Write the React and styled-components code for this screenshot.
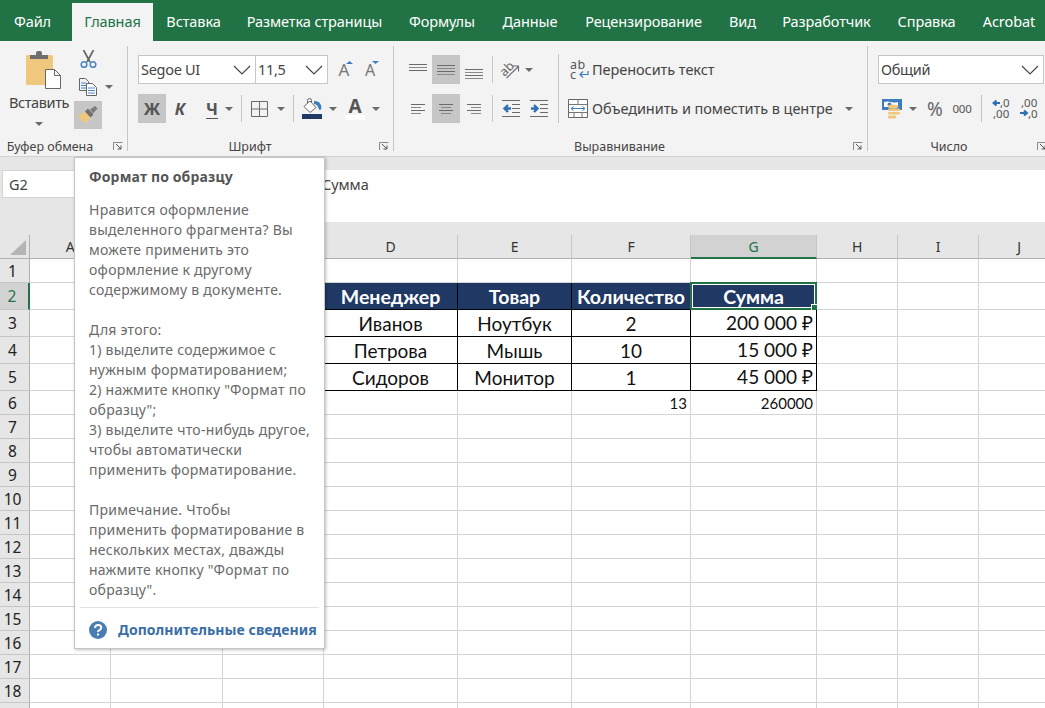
import styled, { createGlobalStyle } from "styled-components";

const UI_FONT = `"Noto Sans", "Open Sans", sans-serif`;
const CELL_FONT = `Lato, "Noto Sans", sans-serif`;

const GlobalStyle = createGlobalStyle`
    html, body {
        margin: 0;
        padding: 0;
        background: #fff;
    }
    * {
        box-sizing: border-box;
    }
`;

const tabs = [
    ["Файл", 72], ["Главная", 81], ["Вставка", 81], ["Разметка страницы", 161], ["Формулы", 94],
    ["Данные", 82], ["Рецензирование", 145], ["Вид", 53], ["Разработчик", 115], ["Справка", 85], ["Acrobat", 80],
];

const colWidths = [30, 81, 112, 101, 134, 114, 119, 126, 81, 81, 81];
const colNames = ["A", "B", "C", "D", "E", "F", "G", "H", "I", "J"];
const rowHeights = [24, 27, 27, 27, 27, 24, 24, 24, 24, 24, 24, 24, 24, 24, 24, 24, 24, 24, 24];

const cells = {
    "2-3": { text: "Менеджер", kind: "head" },
    "2-4": { text: "Товар", kind: "head" },
    "2-5": { text: "Количество", kind: "head" },
    "2-6": { text: "Сумма", kind: "head", selected: true },
    "3-3": { text: "Иванов", kind: "body" },
    "3-4": { text: "Ноутбук", kind: "body" },
    "3-5": { text: "2", kind: "body" },
    "3-6": { text: "200 000 ₽", kind: "body", right: true },
    "4-3": { text: "Петрова", kind: "body" },
    "4-4": { text: "Мышь", kind: "body" },
    "4-5": { text: "10", kind: "body" },
    "4-6": { text: "15 000 ₽", kind: "body", right: true },
    "5-3": { text: "Сидоров", kind: "body" },
    "5-4": { text: "Монитор", kind: "body" },
    "5-5": { text: "1", kind: "body" },
    "5-6": { text: "45 000 ₽", kind: "body", right: true },
    "6-5": { text: "13", kind: "plain", right: true },
    "6-6": { text: "260000", kind: "plain", right: true },
};

const tipParagraphs = [
    "Нравится оформление\nвыделенного фрагмента? Вы\nможете применить это\nоформление к другому\nсодержимому в документе.",
    "Для этого:\n1) выделите содержимое с\nнужным форматированием;\n2) нажмите кнопку \"Формат по\nобразцу\";\n3) выделите что-нибудь другое,\nчтобы автоматически\nприменить форматирование.",
    "Примечание. Чтобы\nприменить форматирование в\nнескольких местах, дважды\nнажмите кнопку \"Формат по\nобразцу\".",
];

const Caret = () => (
    <svg width="8" height="4" viewBox="0 0 8 4"><path d="M0 0h8L4 4z" fill="#6a6a6a" /></svg>
);

const Chevron = () => (
    <ChevronWrap>
        <svg width="18" height="10" viewBox="0 0 18 10"><path d="M1 1l8 8 8-8" fill="none" stroke="#444" strokeWidth="1.1" /></svg>
    </ChevronWrap>
);

const Launcher = () => (
    <svg width="10" height="9" viewBox="0 0 10 9">
        <path d="M.5 8V.5H9.500" fill="none" stroke="#8a8a8a" />
        <path d="M3 2l5 5M8 3.500V7H4.500" fill="none" stroke="#555" />
    </svg>
);

const PasteIcon = () => (
    <svg width="35" height="38" viewBox="0 0 35 38">
        <rect x="0" y="4" width="27" height="30" rx="1.500" fill="#efc77d" />
        <path d="M4 8V4h6V2q0-2 2-2h2q2 0 2 2v2h6v4z" fill="#6f6f6f" />
        <path d="M19.500 18.500h9l6 6v13h-15z" fill="#fff" stroke="#666" />
        <path d="M28.500 18.500v6h6" fill="none" stroke="#666" />
    </svg>
);

const ScissorsIcon = () => (
    <svg width="17" height="18" viewBox="0 0 17 18">
        <path d="M3.500 0l6.500 12M13.500 0L7 12" fill="none" stroke="#666" strokeWidth="1.700" />
        <circle cx="4" cy="14.500" r="2.800" fill="#f3f3f3" stroke="#4a86c5" strokeWidth="1.500" />
        <circle cx="13" cy="14.500" r="2.800" fill="#f3f3f3" stroke="#4a86c5" strokeWidth="1.500" />
    </svg>
);

const CopyIcon = () => (
    <svg width="18" height="18" viewBox="0 0 18 18">
        <path d="M.5.5h6l3 3v9h-9z" fill="#f3f3f3" stroke="#666" />
        <path d="M2 5h5M2 7.500h5M2 10h5" stroke="#4a86c5" />
        <path d="M7.500 5.500h6l4 4v8h-10z" fill="#fff" stroke="#666" />
        <path d="M9 10h7M9 12.500h7M9 15h7" stroke="#4a86c5" />
    </svg>
);

const BrushIcon = () => (
    <svg width="20" height="18" viewBox="0 0 20 18">
        <path d="M0 10l8-5 5 6-5 6q-5-2-8-7z" fill="#efc77d" />
        <path d="M7 5.500l3-3 5.500 6-3 3z" fill="#6f6f6f" />
        <path d="M12 3.500L17 0l2.500 2.500L15 7.500z" fill="#7d7d7d" />
    </svg>
);

const BordersIcon = () => (
    <svg width="17" height="16" viewBox="0 0 17 16">
        <path d="M.5.5h16v15H.5zM8.500.5v15M.5 8h16" fill="none" stroke="#6a6a6a" />
    </svg>
);

const FillIcon = () => (
    <svg width="20" height="21" viewBox="0 0 20 21">
        <path d="M2 8.500l6-5.500 6 6.500-6 5z" fill="#fff" stroke="#666" />
        <path d="M5.500 5V2.500q0-2 2-2t2 2V5" fill="none" stroke="#666" />
        <path d="M12 3q7-.5 7.500 7l-1.500 2.500-2-3q0-3-4-3.500z" fill="#3f7cbf" />
        <rect x="0" y="16" width="20" height="5" fill="#1f3864" />
    </svg>
);

const Lines = ({ rows, width = 18, height = 20 }) => (
    <svg width={width} height={height} viewBox={`0 0 ${width} ${height}`}>
        {rows.map(([x, y, w], i) => (
            <rect key={i} x={x} y={y} width={w} height="1" fill={i % 2 ? "#8a8a8a" : "#6a6a6a"} />
        ))}
    </svg>
);

const OrientIcon = () => (
    <svg width="20" height="18" viewBox="0 0 20 18">
        <text x="0" y="13" fontSize="12.500" fontFamily={UI_FONT} fill="#666" transform="rotate(-45 6 9)">ab</text>
        <path d="M6.500 17L18 6M13 5h5.500v5.500" fill="none" stroke="#6a6a6a" strokeWidth="1.100" />
    </svg>
);

const WrapIcon = () => (
    <svg width="19" height="19" viewBox="0 0 19 19">
        <text x="0" y="9" fontSize="12.500" letterSpacing=".6" fontFamily={UI_FONT} fill="#555">ab</text>
        <text x="0" y="18.500" fontSize="12.500" fontFamily={UI_FONT} fill="#555">c</text>
        <path d="M18 11v3.500H10M13 11.500l-3 3 3 3" fill="none" stroke="#3f7cbf" strokeWidth="1.200" />
    </svg>
);

const MergeIcon = () => (
    <svg width="20" height="19" viewBox="0 0 20 19">
        <path d="M.5.5h19v18H.5z" fill="#fff" stroke="#666" />
        <path d="M.5 5.500h19M.5 13.500h19M10 .5v5M6 13.500v5M14 13.500v5" fill="none" stroke="#777" />
        <path d="M3 9.500h14M5.500 7.500L3 9.500l2.500 2M14.500 7.500l2.500 2-2.500 2" fill="none" stroke="#3f7cbf" />
    </svg>
);

const IndentIcon = ({ right }) => (
    <svg width="18" height="17" viewBox="0 0 18 17">
        <path d="M0 .5h18M10 4.500h8M10 8.500h8M10 12.500h8M0 16.500h18" stroke="#6a6a6a" />
        <path
            d={right ? "M1 8.500h6M4 5l3.500 3.500L4 12" : "M9 8.500H3M6 5L2.500 8.500 6 12"}
            fill="none"
            stroke="#2f6fb5"
            strokeWidth="2.400"
        />
    </svg>
);

const CurrencyIcon = () => (
    <svg width="20" height="20" viewBox="0 0 20 20">
        <rect x="0" y="0" width="20" height="11" fill="#3f7cbf" />
        <path d="M2 3q3-1 7 0t7 0v5H2z" fill="#fff" />
        <ellipse cx="7.500" cy="5.500" rx="2" ry="2" fill="#3f7cbf" />
        <ellipse cx="11" cy="7.500" rx="5.500" ry="2" fill="#efc77d" />
        <rect x="6" y="9.500" width="12" height="2.500" rx="1" fill="#efc77d" />
        <rect x="6" y="13" width="12" height="2.500" rx="1" fill="#efc77d" />
        <rect x="6" y="16.500" width="8" height="3" rx="1" fill="#efc77d" />
    </svg>
);

const DigitsIcon = ({ increase }) => (
    <svg width="18" height="21" viewBox="0 0 18 21">
        <g fontSize="11.500" fontFamily={UI_FONT} fill="#555">
            <text x={increase ? 1 : 8} y="9">{increase ? ",00" : ",0"}</text>
            <text x={increase ? 8 : 1} y="19.500">{increase ? ",0" : ",00"}</text>
        </g>
        <path
            d={increase ? "M0 15h6.500M4 12.500L7 15l-3 2.500" : "M8 5H1.500M4.500 2.500L1.500 5l3 2.500"}
            fill="none"
            stroke="#2f6fb5"
            strokeWidth="2"
        />
    </svg>
);

const GrowMark = ({ down }) => (
    <svg width="7" height="3" viewBox="0 0 7 3">
        <path d={down ? "M0 0h7L3.500 3z" : "M0 3h7L3.500 0z"} fill="#3f7cbf" />
    </svg>
);

const HelpIcon = () => (
    <svg width="18" height="18" viewBox="0 0 18 18">
        <circle cx="9" cy="9" r="9" fill="#4a7eb3" />
        <path d="M6 7q0-3 3.200-3t3 2.700q0 1.500-1.700 2.400T9 11" fill="none" stroke="#fff" strokeWidth="2" />
        <rect x="8" y="12.500" width="2" height="2" fill="#fff" />
    </svg>
);

const CornerMark = () => (
    <svg width="16" height="15" viewBox="0 0 16 15"><path d="M16 0v15H0z" fill="#b4b4b4" /></svg>
);

const SheetRow = ({ r }) => (
    <>
        <RowHead $current={r === 1}>{r + 1}</RowHead>
        {colNames.map((_, c) => {
            const cell = cells[`${r + 1}-${c}`];
            const inTable = r >= 1 && r <= 4 && c >= 3 && c <= 6;
            return (
                <Cell key={c} $table={inTable} $kind={cell?.kind} $right={cell?.right} $selected={cell?.selected}>
                    {cell?.text}
                </Cell>
            );
        })}
    </>
);

const App = () => {
    return (
        <Page>
            <GlobalStyle />
            <TabBar>
                {tabs.map(([name, width], i) => (
                    <Tab key={name} $w={width} $active={i === 1}>{name}</Tab>
                ))}
            </TabBar>
            <Ribbon>
                <Group $w={127}>
                    <GroupBody>
                        <PasteColumn>
                            <PasteArt><PasteIcon /></PasteArt>
                            <PasteLabel>Вставить</PasteLabel>
                            <Caret />
                        </PasteColumn>
                        <ClipTools>
                            <Slot $w={28}><ScissorsIcon /></Slot>
                            <Slot $w={28}>
                                <CopyIcon />
                                <CopyCaret><Caret /></CopyCaret>
                            </Slot>
                            <Slot $w={28} $on><BrushIcon /></Slot>
                        </ClipTools>
                    </GroupBody>
                    <GroupFooter>
                        <GroupLabel $w={100}>Буфер обмена</GroupLabel>
                        <Launcher />
                    </GroupFooter>
                </Group>
                <GroupDivider />
                <Group $w={265}>
                    <GroupBody>
                        <RowStack>
                            <ToolRow>
                                <SelectBox $w={118}><span>Segoe UI</span><Chevron /></SelectBox>
                                <SelectBox $w={72} $joined><span>11,5</span><Chevron /></SelectBox>
                                <Slot $w={16} $ml={8}><SizeGlyph>A<GrowTip><GrowMark /></GrowTip></SizeGlyph></Slot>
                                <Slot $w={14} $ml={11}><SizeGlyph $small>A<GrowTip><GrowMark down /></GrowTip></SizeGlyph></Slot>
                            </ToolRow>
                            <ToolRow>
                                <Slot $w={28} $on><FontGlyph>Ж</FontGlyph></Slot>
                                <Slot $w={28}><FontGlyph $italic>К</FontGlyph></Slot>
                                <Slot $w={26} $ml={5}><FontGlyph $underline>Ч</FontGlyph></Slot>
                                <Slot $w={8}><Caret /></Slot>
                                <RowRule $ml={8} />
                                <Slot $w={17} $ml={9}><BordersIcon /></Slot>
                                <Slot $w={8} $ml={9}><Caret /></Slot>
                                <RowRule $ml={8} />
                                <Slot $w={20} $ml={8}><FillIcon /></Slot>
                                <Slot $w={8} $ml={7}><Caret /></Slot>
                                <Slot $w={20} $ml={8}><ColorGlyph>A</ColorGlyph></Slot>
                                <Slot $w={8} $ml={7}><Caret /></Slot>
                            </ToolRow>
                        </RowStack>
                    </GroupBody>
                    <GroupFooter>
                        <GroupLabel $w={244}>Шрифт</GroupLabel>
                        <Launcher />
                    </GroupFooter>
                </Group>
                <GroupDivider />
                <Group $w={473}>
                    <GroupBody>
                        <RowStack $w={154}>
                            <ToolRow>
                                <Slot $w={28}><Lines rows={[[1, 4, 18], [1, 7, 18], [1, 10, 18]]} width={20} /></Slot>
                                <Slot $w={28} $on><Lines rows={[[1, 5, 18], [1, 8, 18], [1, 11, 18], [1, 14, 18]]} width={20} /></Slot>
                                <Slot $w={28}><Lines rows={[[1, 9, 18], [1, 12, 18], [1, 15, 18], [1, 18, 18]]} width={20} /></Slot>
                                <RowRule $ml={4} />
                                <Slot $w={20} $ml={7}><OrientIcon /></Slot>
                                <Slot $w={8} $ml={5}><Caret /></Slot>
                            </ToolRow>
                            <ToolRow>
                                <Slot $w={28}><Lines rows={[[2, 5, 14], [2, 8, 10], [2, 11, 14], [2, 14, 10]]} /></Slot>
                                <Slot $w={28} $on><Lines rows={[[2, 5, 14], [4, 8, 10], [2, 11, 14], [4, 14, 10]]} /></Slot>
                                <Slot $w={28}><Lines rows={[[2, 5, 14], [6, 8, 10], [2, 11, 14], [6, 14, 10]]} /></Slot>
                                <RowRule $ml={4} />
                                <Slot $w={18} $ml={9}><IndentIcon /></Slot>
                                <Slot $w={18} $ml={10}><IndentIcon right /></Slot>
                            </ToolRow>
                        </RowStack>
                        <BlockRule />
                        <RowStack>
                            <ToolRow>
                                <Slot $w={19} $ml={11}><WrapIcon /></Slot>
                                <ToolText $ml={3}>Переносить текст</ToolText>
                            </ToolRow>
                            <ToolRow>
                                <Slot $w={20} $ml={9}><MergeIcon /></Slot>
                                <ToolText $ml={4}>Объединить и поместить в центре</ToolText>
                                <Slot $w={8} $ml={12}><Caret /></Slot>
                            </ToolRow>
                        </RowStack>
                    </GroupBody>
                    <GroupFooter>
                        <GroupLabel $w={451}>Выравнивание</GroupLabel>
                        <Launcher />
                    </GroupFooter>
                </Group>
                <GroupDivider />
                <Group $w={183}>
                    <GroupBody>
                        <RowStack>
                            <ToolRow>
                                <SelectBox $w={166}><span>Общий</span><Chevron /></SelectBox>
                            </ToolRow>
                            <ToolRow>
                                <Slot $w={20} $ml={4}><CurrencyIcon /></Slot>
                                <Slot $w={8} $ml={7}><Caret /></Slot>
                                <Slot $w={16} $ml={10}><PercentGlyph>%</PercentGlyph></Slot>
                                <Slot $w={18} $ml={10}><ThousandGlyph>000</ThousandGlyph></Slot>
                                <RowRule $ml={10} />
                                <Slot $w={18} $ml={10}><DigitsIcon /></Slot>
                                <Slot $w={18} $ml={10}><DigitsIcon increase /></Slot>
                            </ToolRow>
                        </RowStack>
                    </GroupBody>
                    <GroupFooter>
                        <GroupLabel $w={162}>Число</GroupLabel>
                        <Launcher />
                    </GroupFooter>
                </Group>
            </Ribbon>
            <FormulaStrip>
                <NameBox>G2</NameBox>
                <FormulaInput>Сумма</FormulaInput>
            </FormulaStrip>
            <Sheet>
                <CornerCell><CornerMark /></CornerCell>
                {colNames.map((name) => (
                    <ColHead key={name} $current={name === "G"}>{name}</ColHead>
                ))}
                {rowHeights.map((_, r) => (
                    <SheetRow key={r} r={r} />
                ))}
            </Sheet>
            <ScreenTip>
                <TipTitle>Формат по образцу</TipTitle>
                <TipBody>
                    {tipParagraphs.map((text) => (
                        <TipParagraph key={text}>{text}</TipParagraph>
                    ))}
                </TipBody>
                <TipFooter>
                    <HelpIcon />
                    <TipLink>Дополнительные сведения</TipLink>
                </TipFooter>
            </ScreenTip>
        </Page>
    );
};

const Page = styled.div`
    position: relative;
    width: 1045px;
    height: 708px;
    overflow: hidden;
    font-family: ${UI_FONT};
    color: #444;
    background: #fff;
`;

const TabBar = styled.div`
    display: flex;
    height: 41px;
    padding-top: 3px;
    background: #217346;
    overflow: hidden;
`;

const Tab = styled.div`
    flex: 0 0 ${(p) => p.$w}px;
    display: flex;
    align-items: center;
    justify-content: center;
    padding-bottom: 3px;
    font-size: 14.5px;
    letter-spacing: -0.1px;
    white-space: nowrap;
    color: ${(p) => (p.$active ? "#217346" : "#fff")};
    background: ${(p) => (p.$active ? "#f3f3f3" : "transparent")};

    &:first-child {
        padding-right: 7px;
    }
`;

const Ribbon = styled.div`
    display: flex;
    height: 116px;
    background: #f3f3f3;
    border-bottom: 1px solid #d2d2d2;
    overflow: hidden;
`;

const Group = styled.section`
    flex: 0 0 ${(p) => p.$w}px;
    display: flex;
    flex-direction: column;
`;

const GroupBody = styled.div`
    flex: 1;
    display: flex;
    min-height: 0;
    padding-left: 10px;
`;

const GroupFooter = styled.div`
    flex: 0 0 22px;
    display: flex;
    align-items: center;
    justify-content: space-between;
    padding: 2px 4px 0 0;
`;

const GroupLabel = styled.div`
    width: ${(p) => p.$w}px;
    text-align: center;
    font-size: 12.5px;
    color: #444;
    white-space: nowrap;
`;

const GroupDivider = styled.div`
    flex: 0 0 1px;
    margin: 5px 0;
    background: #c6c6c6;
`;

const PasteColumn = styled.div`
    flex: 0 0 60px;
    margin: 0 5px 0 -1px;
    display: flex;
    flex-direction: column;
    align-items: center;
    padding-top: 10px;
`;

const PasteArt = styled.div`
    height: 38px;
    margin-left: 8px;
`;

const PasteLabel = styled.div`
    margin: 3px 0 10px;
    font-size: 14.5px;
    letter-spacing: -0.4px;
    line-height: 20px;
    white-space: nowrap;
`;

const ClipTools = styled.div`
    display: flex;
    flex-direction: column;
    padding-top: 4px;
`;

const CopyCaret = styled.span`
    position: absolute;
    left: 31px;
    top: 12px;
    display: flex;
`;

const Slot = styled.div`
    position: relative;
    flex: 0 0 ${(p) => p.$w}px;
    width: ${(p) => p.$w}px;
    height: 29px;
    margin-left: ${(p) => p.$ml ?? 0}px;
    display: flex;
    align-items: center;
    justify-content: center;
    background: ${(p) => (p.$on ? "#c6c6c6" : "transparent")};
`;

const RowStack = styled.div`
    flex: 0 0 ${(p) => (p.$w ? `${p.$w}px` : "auto")};
    display: flex;
    flex-direction: column;
    gap: 10px;
    padding-top: 14px;
`;

const ToolRow = styled.div`
    display: flex;
    align-items: center;
    height: 29px;
`;

const RowRule = styled.div`
    flex: 0 0 1px;
    height: 27px;
    margin-left: ${(p) => p.$ml ?? 0}px;
    background: #c6c6c6;
`;

const BlockRule = styled.div`
    flex: 0 0 1px;
    height: 69px;
    margin-top: 13px;
    background: #c6c6c6;
`;

const SelectBox = styled.div`
    flex: 0 0 ${(p) => p.$w}px;
    height: 29px;
    display: flex;
    align-items: center;
    justify-content: space-between;
    padding: 0 4px 2px 2px;
    background: #fff;
    border: 1px solid #c6c6c6;
    border-left-width: ${(p) => (p.$joined ? 0 : 1)}px;
    font-size: 14.5px;
    letter-spacing: -0.3px;
    color: #444;
    white-space: nowrap;
`;

const ChevronWrap = styled.span`
    display: flex;
    margin-top: 2px;
`;

const SizeGlyph = styled.div`
    position: relative;
    font-size: ${(p) => (p.$small ? 16 : 17)}px;
    line-height: 20px;
    color: #777;
`;

const GrowTip = styled.span`
    position: absolute;
    right: -4px;
    top: 1px;
    display: flex;
`;

const FontGlyph = styled.span`
    font-size: 16.5px;
    font-weight: 700;
    font-style: ${(p) => (p.$italic ? "italic" : "normal")};
    color: #555;
    text-decoration: ${(p) => (p.$underline ? "underline" : "none")};
    text-underline-offset: 3px;
`;

const ColorGlyph = styled.span`
    display: block;
    width: 20px;
    margin-top: 1px;
    text-align: center;
    font-size: 19px;
    font-weight: 700;
    line-height: 17px;
    color: #555;
    border-bottom: 5px solid #fff;
`;

const ToolText = styled.div`
    margin-left: ${(p) => p.$ml}px;
    padding-bottom: 2px;
    font-size: 14.5px;
    letter-spacing: -0.06px;
    color: #444;
    white-space: nowrap;
`;

const PercentGlyph = styled.span`
    font-size: 19px;
    color: #666;
`;

const ThousandGlyph = styled.span`
    font-size: 11.5px;
    color: #555;
    letter-spacing: -0.2px;
`;

const FormulaStrip = styled.div`
    display: flex;
    height: 78px;
    padding: 13px 0 13px 2px;
    background: #e6e6e6;
`;

const NameBox = styled.div`
    flex: 0 0 100px;
    height: 28px;
    padding-left: 6px;
    line-height: 26px;
    font-size: 14.5px;
    background: #fff;
    border: 1px solid #d4d4d4;
    color: #444;
`;

const FormulaInput = styled.div`
    flex: 1;
    margin-left: 200px;
    padding: 4px 0 0 20px;
    font-size: 14.5px;
    letter-spacing: -0.06px;
    color: #444;
    background: #fff;
`;

const Sheet = styled.div`
    display: grid;
    grid-template-columns: ${colWidths.map((w) => `${w}px`).join(" ")};
    grid-template-rows: 24px ${rowHeights.map((h) => `${h}px`).join(" ")};
    background: #fff;
`;

const CornerCell = styled.div`
    display: flex;
    align-items: flex-end;
    justify-content: flex-end;
    padding: 0 3px 3px 0;
    background: #e6e6e6;
    border-right: 1px solid #b1b1b1;
    border-bottom: 1px solid #b1b1b1;
`;

const ColHead = styled.div`
    display: flex;
    align-items: center;
    justify-content: center;
    font-size: 14px;
    letter-spacing: -0.3px;
    color: ${(p) => (p.$current ? "#217346" : "#333")};
    background: ${(p) => (p.$current ? "#d2d2d2" : "#e6e6e6")};
    border-right: 1px solid #c6c6c6;
    border-bottom: ${(p) => (p.$current ? "2px solid #217346" : "1px solid #b1b1b1")};
`;

const RowHead = styled.div`
    display: flex;
    align-items: center;
    justify-content: center;
    padding-right: 4px;
    font-size: 15.5px;
    color: ${(p) => (p.$current ? "#217346" : "#222")};
    background: ${(p) => (p.$current ? "#d2d2d2" : "#e6e6e6")};
    border-bottom: 1px solid #c6c6c6;
    border-right: ${(p) => (p.$current ? "2px solid #217346" : "1px solid #b1b1b1")};
`;

const kindFonts = {
    head: "700 19.5px",
    body: "400 19px",
    plain: "400 15px",
};

const Cell = styled.div`
    position: relative;
    display: flex;
    align-items: center;
    justify-content: ${(p) => (p.$right ? "flex-end" : "center")};
    padding: 0 ${(p) => (p.$right ? "3px" : "0")};
    font: ${(p) => kindFonts[p.$kind] ?? "400 15px"} ${CELL_FONT};
    white-space: nowrap;
    color: ${(p) => (p.$kind === "head" ? "#fff" : "#111")};
    background: ${(p) => (p.$kind === "head" ? "#1f3864" : "#fff")};
    border-right: 1px solid ${(p) => (p.$table ? "#000" : "#d4d4d4")};
    border-bottom: 1px solid ${(p) => (p.$table ? "#000" : "#d4d4d4")};

    ${(p) => p.$selected && `
        &::before {
            content: "";
            position: absolute;
            inset: -1px -1px -1px -1px;
            border: 2px solid #217346;
            outline: 1px solid #fff;
            outline-offset: -3px;
        }
        &::after {
            content: "";
            position: absolute;
            right: -4px;
            bottom: -4px;
            width: 7px;
            height: 7px;
            background: #217346;
            border: 1px solid #fff;
        }
    `}
`;

const ScreenTip = styled.aside`
    position: absolute;
    left: 74px;
    top: 157px;
    width: 251px;
    height: 492px;
    display: flex;
    flex-direction: column;
    padding: 0 5px;
    background: #fff;
    border: 1px solid #c6c6c6;
    box-shadow: 1px 1px 3px rgba(0, 0, 0, 0.25);
    z-index: 2;
`;

const TipTitle = styled.div`
    padding: 9px 0 0 9px;
    font-size: 14px;
    line-height: 20px;
    font-weight: 700;
    letter-spacing: 0.15px;
    color: #555;
`;

const TipBody = styled.div`
    flex: 1;
    display: flex;
    flex-direction: column;
    gap: 20px;
    padding: 13px 0 0 9px;
`;

const TipParagraph = styled.div`
    font-size: 14px;
    line-height: 20px;
    letter-spacing: 0.25px;
    white-space: pre-line;
    color: #6a6a6a;
`;

const TipFooter = styled.div`
    display: flex;
    align-items: center;
    height: 41px;
    gap: 11px;
    padding: 3px 0 0 9px;
    border-top: 1px solid #e1e1e1;
`;

const TipLink = styled.div`
    font-size: 14px;
    font-weight: 700;
    letter-spacing: 0.05px;
    white-space: nowrap;
    color: #3a6ea5;
`;

export default App;
